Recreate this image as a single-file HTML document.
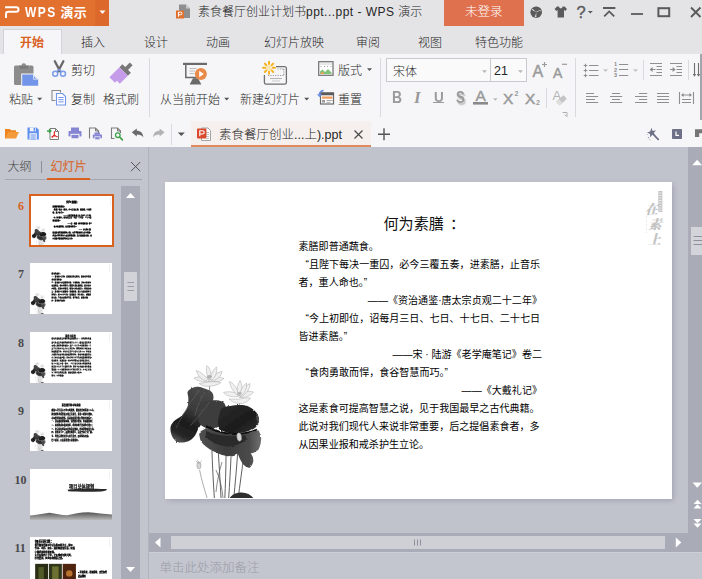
<!DOCTYPE html>
<html lang="zh-CN"><head><meta charset="utf-8"><title>WPS 演示</title>
<style>
*{box-sizing:border-box;margin:0;padding:0}
html,body{width:702px;height:579px;overflow:hidden;background:#c2c4ce}
body{position:relative;font-family:"Liberation Sans","Noto Sans CJK SC",sans-serif;font-size:12px;color:#3a3a3a;font-weight:300}
.a{position:absolute}
.t{position:absolute;white-space:nowrap;line-height:1}
svg.ov{position:absolute;left:0;top:0;width:702px;height:579px;overflow:visible}
#titlebar{left:0;top:0;width:702px;height:54px;background:#e4e4e7}
#wpsbtn{left:0;top:0;width:95px;height:25.5px;background:#e2712f}
#wpsdd{left:95px;top:0;width:14px;height:25.5px;background:#dc692b}
#login{left:444px;top:0;width:80px;height:25.5px;background:#e0714f}
#acttab{left:3px;top:29px;width:59px;height:26px;background:#f6f6f8;border:1px solid #d2d3d9;border-bottom:none}
#ribbon{left:0;top:54px;width:702px;height:93px;background:#f6f6f8}
#doctab{left:191px;top:121px;width:180px;height:26px;background:#f5f0ed;border-bottom:2px solid #e0895c}
.tab{font-size:12px;top:37px;color:#262626}
.rl{font-size:12px;color:#262626}
.sep{position:absolute;width:1px;background:#d9dade}
#fontbox{left:386px;top:58px;width:105px;height:24px;border:1px solid #c9cacf;background:#fafafb}
#sizebox{left:490px;top:58px;width:37px;height:24px;border:1px solid #c9cacf;background:#fafafb}
#side{left:0;top:147px;width:148px;height:432px;background:#c2c4ce}
#sidesep{left:148px;top:147px;width:1px;height:432px;background:#b0b2bd}
#main{left:149px;top:147px;width:553px;height:432px;background:#c0c2cc}
#sscroll{left:121px;top:186px;width:19px;height:393px;background:#a9abb7}
#shandle{left:124px;top:272px;width:13px;height:29px;background:#d1d3d9;border-radius:1px}
#slide{left:165px;top:182px;width:507px;height:316.5px;background:#fff;box-shadow:1.5px 1.5px 5px rgba(60,60,85,.22)}
#vscroll{left:688px;top:147px;width:14px;height:386px;background:#a9abb7}
#vhandle{left:691px;top:227px;width:11px;height:28px;background:#d3d4da}
#hscroll{left:149px;top:532.5px;width:553px;height:20px;background:#a9abb7}
#htrack{left:171px;top:535.5px;width:494px;height:13.5px;background:#cfd0d6}
#notes{left:149px;top:552px;width:553px;height:27px;background:#c3c5cf;border-top:1px solid #cdcfd7}
.thumb{left:30px;width:82px;height:51px;background:#fff;overflow:hidden}
.num{font-family:"Liberation Serif",serif;font-weight:bold;font-size:12px;color:#4a4a4a}
.sl{font-size:10.06px;color:#000;left:298.5px;font-weight:400}
.sr{font-size:10.06px;color:#000;right:160px;font-weight:400}
.q{display:inline-block;width:10.4px;text-align:right}
.g{color:#9a9a9a}
.gs{-webkit-text-stroke:.45px #9a9a9a}
.tc{position:absolute;left:0;top:0;width:507px;height:316px;transform:scale(.1617);transform-origin:0 0}
</style></head><body>
<div class="a" id="titlebar"></div>
<div class="a" id="wpsbtn"></div><div class="a" id="wpsdd"></div>
<div class="t" style="left:25px;top:6px;font-size:13px;color:#fff;font-weight:bold;letter-spacing:.3px"><span style="display:inline-block;font-size:12px;letter-spacing:1.4px;transform:scaleY(1.16);transform-origin:0 70%">WPS</span> 演示</div>
<div class="t" style="left:198px;top:6px;font-size:12px;color:#262626">素食餐厅创业计划书<span style="letter-spacing:.47px">ppt...ppt - WPS </span>演示</div>
<div class="a" id="login"></div>
<div class="t" style="left:465px;top:6px;font-size:12.5px;color:#fff">未登录</div>
<div class="a" id="acttab"></div>
<div class="t tab" style="left:20px;color:#d9611e;font-weight:bold">开始</div>
<div class="t tab" style="left:81px">插入</div>
<div class="t tab" style="left:144px">设计</div>
<div class="t tab" style="left:206px">动画</div>
<div class="t tab" style="left:264px">幻灯片放映</div>
<div class="t tab" style="left:356px">审阅</div>
<div class="t tab" style="left:418px">视图</div>
<div class="t tab" style="left:475px">特色功能</div>
<div class="a" id="ribbon"></div>
<div class="sep" style="left:149px;top:58px;height:59px"></div>
<div class="sep" style="left:380px;top:58px;height:59px"></div>
<div class="sep" style="left:575px;top:58px;height:59px"></div>
<div class="sep" style="left:546px;top:88px;height:20px"></div>
<div class="sep" style="left:643px;top:60px;height:20px"></div>
<div class="sep" style="left:688px;top:60px;height:20px"></div>
<div class="sep" style="left:171px;top:124px;height:21px"></div>
<div class="t rl" style="left:9px;top:94px">粘贴</div>
<div class="t rl" style="left:71px;top:65px">剪切</div>
<div class="t rl" style="left:71px;top:94px">复制</div>
<div class="t rl" style="left:103px;top:94px">格式刷</div>
<div class="t rl" style="left:160px;top:94px">从当前开始</div>
<div class="t rl" style="left:240px;top:94px">新建幻灯片</div>
<div class="t rl" style="left:338px;top:65px">版式</div>
<div class="t rl" style="left:338px;top:94px">重置</div>
<div class="a" style="left:700px;top:54px;width:2px;height:66px;background:#a3a5ad"></div>
<div class="a" id="fontbox"></div><div class="a" id="sizebox"></div>
<div class="t rl" style="left:393px;top:66px">宋体</div>
<div class="t rl" style="left:494px;top:65px;font-size:12.5px">21</div>
<div class="t g" style="left:391.500px;top:89px;font-size:16.500px;font-weight:bold;transform:scaleX(.84);transform-origin:0 0">B</div>
<div class="t g" style="left:414px;top:88.500px;font-size:17px;font-weight:bold;font-style:italic;font-family:'Liberation Serif',serif">I</div>
<div class="t g" style="left:433.500px;top:89px;font-size:15px;font-weight:bold;transform:scaleX(.9);transform-origin:0 0">U</div>
<div class="a" style="left:433px;top:102px;width:11px;height:1px;background:#9a9a9a"></div>
<div class="t g" style="left:455.500px;top:89px;font-size:16.500px;font-weight:bold;text-shadow:1.500px 1.500px 1.500px #bbb;transform:scaleX(.8);transform-origin:0 0">S</div>
<div class="t g gs" style="left:475.500px;top:87.500px;font-size:15.500px">A</div>
<div class="t g gs" style="left:503px;top:91px;font-size:15.500px">X</div>
<div class="t g" style="left:514.500px;top:90px;font-size:7px;font-weight:bold">2</div>
<div class="t g gs" style="left:525px;top:91px;font-size:15.500px">X</div>
<div class="t g" style="left:536px;top:98.500px;font-size:7px;font-weight:bold">2</div>
<div class="t g gs" style="left:532.500px;top:64px;font-size:16px">A</div>
<div class="t g gs" style="left:553px;top:65.500px;font-size:14px">A</div>
<div class="t" style="left:552.500px;top:89px;font-size:13px;color:#b5b5b5">A</div>
<div class="a" id="doctab"></div>
<div class="t" style="left:219px;top:129px;font-size:12.5px;color:#262626">素食餐厅创业...上).ppt</div>
<div class="a" id="side"></div><div class="a" id="sidesep"></div>
<div class="a" id="main"></div>
<div class="t" style="left:7.5px;top:161px;font-size:12px;color:#444">大纲</div>
<div class="a" style="left:40.5px;top:161px;width:1px;height:12px;background:#8c8e98"></div>
<div class="t" style="left:50.5px;top:161px;font-size:12px;color:#d9611e;-webkit-text-stroke:.3px #d9611e">幻灯片</div>
<div class="a" style="left:5px;top:179px;width:137px;height:1px;background:#a3a5b0"></div>
<div class="a" style="left:47px;top:178px;width:43px;height:2px;background:#d9611e"></div>
<div class="a" id="sscroll"></div><div class="a" id="shandle"></div>
<!--THUMBS-->
<div class="t num" style="left:18px;top:200px;color:#d9611e">6</div>
<div class="t num" style="left:18px;top:268px;color:#4a4a4a">7</div>
<div class="t num" style="left:18px;top:336.5px;color:#4a4a4a">8</div>
<div class="t num" style="left:18px;top:405px;color:#4a4a4a">9</div>
<div class="t num" style="left:14.5px;top:473.5px;color:#4a4a4a">10</div>
<div class="t num" style="left:14.5px;top:542px;color:#4a4a4a">11</div>
<div class="a" style="left:28.5px;top:194px;width:85px;height:53px;background:#d9611e"></div>
<div class="a thumb" style="left:30.5px;top:196px;width:81px;height:49px"><div class="tc"><svg class="a" style="left:0;top:0;width:507px;height:316px" viewBox="165 182 507 316"><use href="#lotus"/><rect x="655" y="191" width="5" height="50" fill="#ececec"/></svg><div class="t" style="left:218px;top:33px;font-size:16px;font-weight:900;color:#000;-webkit-text-stroke:1.2px #000;">何为素膳：</div><div class="t" style="left:133px;top:59px;font-size:10.13px;font-weight:900;color:#000;-webkit-text-stroke:1.2px #000;">素膳即普通蔬食。</div><div class="t" style="left:133px;top:77px;font-size:10.13px;font-weight:900;color:#000;-webkit-text-stroke:1.2px #000;">&nbsp;“且陛下每决一重囚，必今三覆五奏，进素膳，止音乐</div><div class="t" style="left:133px;top:95px;font-size:10.13px;font-weight:900;color:#000;-webkit-text-stroke:1.2px #000;">者，重人命也。”</div><div class="t" style="right:130px;top:113px;font-size:10.13px;font-weight:900;color:#000;-webkit-text-stroke:1.2px #000;">——《资治通鉴·唐太宗贞观二十二年》</div><div class="t" style="left:133px;top:131px;font-size:10.13px;font-weight:900;color:#000;-webkit-text-stroke:1.2px #000;">&nbsp;“今上初即位，诏每月三日、七日、十七日、二十七日</div><div class="t" style="left:133px;top:149px;font-size:10.13px;font-weight:900;color:#000;-webkit-text-stroke:1.2px #000;">皆进素膳。”</div><div class="t" style="right:130px;top:167px;font-size:10.13px;font-weight:900;color:#000;-webkit-text-stroke:1.2px #000;">——宋 · 陆游《老学庵笔记》卷二</div><div class="t" style="left:133px;top:185px;font-size:10.13px;font-weight:900;color:#000;-webkit-text-stroke:1.2px #000;">&nbsp;“食肉勇敢而悍，食谷智慧而巧。”</div><div class="t" style="right:130px;top:203px;font-size:10.13px;font-weight:900;color:#000;-webkit-text-stroke:1.2px #000;">——《大戴礼记》</div><div class="t" style="left:133px;top:221px;font-size:10.13px;font-weight:900;color:#000;-webkit-text-stroke:1.2px #000;">这是素食可提高智慧之说，见于我国最早之古代典籍。</div><div class="t" style="left:133px;top:239px;font-size:10.13px;font-weight:900;color:#000;-webkit-text-stroke:1.2px #000;">此说对我们现代人来说非常重要，后之提倡素食者，多</div><div class="t" style="left:133px;top:257px;font-size:10.13px;font-weight:900;color:#000;-webkit-text-stroke:1.2px #000;">从因果业报和戒杀护生立论。</div></div></div>
<div class="a thumb" style="left:30px;top:263px;width:82px;height:51px"><div class="tc"><svg class="a" style="left:0;top:0;width:507px;height:316px" viewBox="165 182 507 316"><use href="#lotus"/><rect x="655" y="191" width="5" height="50" fill="#ececec"/></svg><div class="t" style="left:133px;top:60.0px;font-size:10.13px;font-weight:900;color:#000;-webkit-text-stroke:0.9px #000;">素食的益处：</div><div class="t" style="left:133px;top:78.2px;font-size:10.13px;font-weight:900;color:#000;-webkit-text-stroke:0.9px #000;">一、素食使人长寿。根据营养学家研究，素食者比非素</div><div class="t" style="left:133px;top:96.4px;font-size:10.13px;font-weight:900;color:#000;-webkit-text-stroke:0.9px #000;">食者长寿得多。</div><div class="t" style="left:133px;top:114.6px;font-size:10.13px;font-weight:900;color:#000;-webkit-text-stroke:0.9px #000;">二、素食使人体质酸碱平衡，不易得病。动物肉类食物</div><div class="t" style="left:133px;top:132.8px;font-size:10.13px;font-weight:900;color:#000;-webkit-text-stroke:0.9px #000;">多呈酸性，使血液酸化；蔬菜水果多呈碱性，能中和体</div><div class="t" style="left:133px;top:151.0px;font-size:10.13px;font-weight:900;color:#000;-webkit-text-stroke:0.9px #000;">内酸性，保持血液清洁，增强人体免疫能力，预防疾病。</div><div class="t" style="left:133px;top:169.2px;font-size:10.13px;font-weight:900;color:#000;-webkit-text-stroke:0.9px #000;">三、素食使人头脑清晰、思维敏捷，能大大提高智慧与</div><div class="t" style="left:133px;top:187.39999999999998px;font-size:10.13px;font-weight:900;color:#000;-webkit-text-stroke:0.9px #000;">判断力，使人心平气和、性情温良、耐力持久，减轻肠</div><div class="t" style="left:133px;top:205.6px;font-size:10.13px;font-weight:900;color:#000;-webkit-text-stroke:0.9px #000;">胃负担，也使皮肤细腻光洁，容光焕发，身轻体健。</div><div class="t" style="left:133px;top:223.79999999999998px;font-size:10.13px;font-weight:900;color:#000;-webkit-text-stroke:0.9px #000;">四、素食最为经济。</div></div></div>
<div class="a thumb" style="left:30px;top:331.5px;width:82px;height:51px"><div class="tc"><svg class="a" style="left:0;top:0;width:507px;height:316px" viewBox="165 182 507 316"><use href="#lotus"/><rect x="655" y="191" width="5" height="50" fill="#ececec"/></svg><div class="t" style="left:218px;top:18px;font-size:13px;font-weight:900;color:#000;-webkit-text-stroke:1.2px #000;">素食与环保</div><div class="t" style="left:133px;top:38px;font-size:10.2px;font-weight:900;color:#000;-webkit-text-stroke:0.6px #000;">畜牧业是造成全球暖化的主要原因之一，其所排放的温</div><div class="t" style="left:133px;top:57px;font-size:10.2px;font-weight:900;color:#000;-webkit-text-stroke:0.6px #000;">室气体占全球总排放量的百分之十八，超过全世界所有</div><div class="t" style="left:133px;top:76px;font-size:10.2px;font-weight:900;color:#000;-webkit-text-stroke:0.6px #000;">交通工具排放量的总和。生产一公斤牛肉需要消耗一万</div><div class="t" style="left:133px;top:95px;font-size:10.2px;font-weight:900;color:#000;-webkit-text-stroke:0.6px #000;">五千公升的水以及七公斤的谷物，而同样的土地若用来</div><div class="t" style="left:133px;top:114px;font-size:10.2px;font-weight:900;color:#000;-webkit-text-stroke:0.6px #000;">种植蔬菜谷物，则可以养活二十倍以上的人口。雨林被</div><div class="t" style="left:133px;top:133px;font-size:10.2px;font-weight:900;color:#000;-webkit-text-stroke:0.6px #000;">大量砍伐用来放牧和种植饲料作物，导致物种急剧消失，</div><div class="t" style="left:133px;top:152px;font-size:10.2px;font-weight:900;color:#000;-webkit-text-stroke:0.6px #000;">水土流失日益严重，河流与地下水也受到牲畜粪便污染。</div><div class="t" style="left:133px;top:171px;font-size:10.2px;font-weight:900;color:#000;-webkit-text-stroke:0.6px #000;">选择素食，就是选择一种对地球更加友善的生活方式，</div><div class="t" style="left:133px;top:190px;font-size:10.2px;font-weight:900;color:#000;-webkit-text-stroke:0.6px #000;">每个人每天少吃一餐肉，一年下来可以减少的碳排放量</div><div class="t" style="left:133px;top:209px;font-size:10.2px;font-weight:900;color:#000;-webkit-text-stroke:0.6px #000;">相当于少开几千公里的汽车。素食不仅有益于身体健康，</div><div class="t" style="left:133px;top:228px;font-size:10.2px;font-weight:900;color:#000;-webkit-text-stroke:0.6px #000;">更是每一个人都能够身体力行的环保行动，从今天开始，</div><div class="t" style="left:133px;top:247px;font-size:10.2px;font-weight:900;color:#000;-webkit-text-stroke:0.6px #000;">为了我们共同的家园，请多吃蔬食少吃肉。</div><div class="t" style="left:133px;top:266px;font-size:10.2px;font-weight:900;color:#000;-webkit-text-stroke:0.6px #000;">素食，从我做起。</div></div></div>
<div class="a thumb" style="left:30px;top:400px;width:82px;height:51px"><div class="tc"><svg class="a" style="left:0;top:0;width:507px;height:316px" viewBox="165 182 507 316"><use href="#lotus"/><rect x="655" y="191" width="5" height="50" fill="#ececec"/></svg><div class="t" style="left:196px;top:26px;font-size:13px;font-weight:900;color:#000;-webkit-text-stroke:1.2px #000;">素食餐厅的市场前景</div><div class="t" style="left:133px;top:60px;font-size:10.8px;font-weight:900;color:#000;-webkit-text-stroke:0.9px #000;">随着人们生活水平的不断提高，健康饮食观念深入人心，</div><div class="t" style="left:133px;top:83px;font-size:10.8px;font-weight:900;color:#000;-webkit-text-stroke:0.9px #000;">越来越多的消费者开始关注素食，素食人群逐年增加，</div><div class="t" style="left:133px;top:106px;font-size:10.8px;font-weight:900;color:#000;-webkit-text-stroke:0.9px #000;">市场需求持续增长。目前国内素食餐厅数量仍然偏少，</div><div class="t" style="left:133px;top:129px;font-size:10.8px;font-weight:900;color:#000;-webkit-text-stroke:0.9px #000;">一、目标顾客群体明确，消费能力较强，忠诚度很高；</div><div class="t" style="left:133px;top:152px;font-size:10.8px;font-weight:900;color:#000;-webkit-text-stroke:0.9px #000;">二、原材料成本相对较低，毛利率高于普通的中餐厅；</div><div class="t" style="left:133px;top:175px;font-size:10.8px;font-weight:900;color:#000;-webkit-text-stroke:0.9px #000;">三、符合绿色低碳环保的发展潮流，容易获得政策支持。</div><div class="t" style="left:133px;top:198px;font-size:10.8px;font-weight:900;color:#000;-webkit-text-stroke:0.9px #000;">四、竞争对手少，品牌容易建立，发展空间十分广阔。</div><div class="t" style="left:133px;top:221px;font-size:10.8px;font-weight:900;color:#000;-webkit-text-stroke:0.9px #000;">五、可结合禅茶文化与养生讲座，形成特色经营。</div><div class="t" style="left:133px;top:244px;font-size:10.8px;font-weight:900;color:#000;-webkit-text-stroke:0.9px #000;">综上所述，开设素食餐厅前景看好。</div></div></div>
<div class="a thumb" style="left:30px;top:468.5px;width:82px;height:51px"><div class="tc"><svg class="a" style="left:0;top:0;width:507px;height:316px" viewBox="0 0 507 316"><defs><filter id="b10"><feGaussianBlur stdDeviation="3"/></filter><linearGradient id="m10" x1="0" y1="0" x2="0" y2="1"><stop offset="0" stop-color="#555"/><stop offset="1" stop-color="#bbb"/></linearGradient></defs><path d="M232 128c40-6 120-8 240-4 10 6-8 14-30 15-70 3-150 2-205-1z" fill="#2a2a2a" filter="url(#b10)"/><path d="M0 288c40-4 80-14 120-18 40 4 70 14 110 16 40-6 80-18 130-18 50 2 100 12 147 14v34H0z" fill="url(#m10)" filter="url(#b10)"/><rect x="490" y="9" width="5" height="50" fill="#ececec"/></svg><div class="t" style="left:241px;top:96px;font-size:26px;font-weight:700;color:#000;-webkit-text-stroke:1.2px #000;color:#333">项目总体规划</div></div></div>
<div class="a thumb" style="left:30px;top:537px;width:82px;height:42px"><div class="tc"><svg class="a" style="left:0;top:0;width:507px;height:316px" viewBox="0 0 507 316"><rect x="32" y="166" width="80" height="150" fill="#2a2c14"/><rect x="52" y="186" width="34" height="130" fill="#4f5a26"/><rect x="117" y="166" width="80" height="150" fill="#30361a"/><rect x="137" y="182" width="40" height="134" fill="#6c7030"/><rect x="202" y="166" width="82" height="150" fill="#4e240e"/><circle cx="243" cy="225" r="20" fill="#b8722c"/><rect x="490" y="9" width="5" height="50" fill="#ececec"/></svg><div class="t" style="left:30px;top:16px;font-size:24px;font-weight:900;color:#000;-webkit-text-stroke:1.2px #000;">餐厅环境：</div><div class="t" style="left:30px;top:46px;font-size:13px;font-weight:900;color:#000;-webkit-text-stroke:1.2px #000;">餐厅整体装修以中式古典风格为主，配以</div><div class="t" style="left:30px;top:66px;font-size:13px;font-weight:900;color:#000;-webkit-text-stroke:1.2px #000;">竹木、山石、流水、莲花等自然元素，营造</div><div class="t" style="left:30px;top:86px;font-size:13px;font-weight:900;color:#000;-webkit-text-stroke:1.2px #000;">宁静祥和的用餐氛围。</div><div class="t" style="left:30px;top:106px;font-size:13px;font-weight:900;color:#000;-webkit-text-stroke:1.2px #000;">大厅设散座八十位，另设雅致包间六间，</div><div class="t" style="left:30px;top:126px;font-size:13px;font-weight:900;color:#000;-webkit-text-stroke:1.2px #000;">灯光柔和，处处体现禅意之美。</div><div class="t" style="left:297px;top:214px;font-size:12px;font-weight:900;color:#000;-webkit-text-stroke:1.2px #000;">■ 环境优雅，格调清新，宾至如归</div><div class="t" style="left:297px;top:238px;font-size:12px;font-weight:900;color:#000;-webkit-text-stroke:1.2px #000;">菜品精致</div></div></div>
<!--/THUMBS-->
<div class="a" id="slide"></div>
<div class="t" style="left:383.5px;top:215.5px;font-size:15.1px;color:#111;font-weight:400">何为素膳<span style="margin-left:6px">：</span></div>
<div class="t sl" style="top:241.6px">素膳即普通蔬食。</div>
<div class="t sl" style="top:259.7px"><span class="q">“</span>且陛下每决一重囚，必今三覆五奏，进素膳，止音乐</div>
<div class="t sl" style="top:277.7px">者，重人命也。”</div>
<div class="t sr" style="top:295.8px">——《资治通鉴·唐太宗贞观二十二年》</div>
<div class="t sl" style="top:313.9px"><span class="q">“</span>今上初即位，诏每月三日、七日、十七日、二十七日</div>
<div class="t sl" style="top:331.9px">皆进素膳。”</div>
<div class="t sr" style="top:350.0px">——宋 · 陆游《老学庵笔记》卷二</div>
<div class="t sl" style="top:368.1px"><span class="q">“</span>食肉勇敢而悍，食谷智慧而巧。”</div>
<div class="t sr" style="top:386.2px">——《大戴礼记》</div>
<div class="t sl" style="top:404.2px">这是素食可提高智慧之说，见于我国最早之古代典籍。</div>
<div class="t sl" style="top:422.3px">此说对我们现代人来说非常重要，后之提倡素食者，多</div>
<div class="t sl" style="top:440.4px">从因果业报和戒杀护生立论。</div>
<!--LOTUS-->
<svg class="ov" viewBox="0 0 702 579">
<defs>
<filter id="bl" x="-10%" y="-10%" width="120%" height="120%"><feGaussianBlur stdDeviation="0.4"/></filter><filter id="lf" x="-10%" y="-10%" width="120%" height="120%"><feTurbulence type="fractalNoise" baseFrequency="0.22" numOctaves="2" seed="5" result="n"/><feDisplacementMap in="SourceGraphic" in2="n" scale="2.4" xChannelSelector="R" yChannelSelector="G" result="d"/><feGaussianBlur in="d" stdDeviation="0.35"/></filter>
<linearGradient id="lg1" x1=".7" y1="0" x2=".3" y2="1"><stop offset="0" stop-color="#484848"/><stop offset=".4" stop-color="#3c3c3c"/><stop offset=".68" stop-color="#1c1c1c"/><stop offset=".9" stop-color="#262626"/><stop offset="1" stop-color="#4c4c4c"/></linearGradient><linearGradient id="lg2" x1="0" y1="0" x2="1" y2="1"><stop offset="0" stop-color="#2c2c2c"/><stop offset=".6" stop-color="#1c1c1c"/><stop offset="1" stop-color="#333"/></linearGradient>
<linearGradient id="lg3" x1="0" y1="0" x2="1" y2="0"><stop offset="0" stop-color="#505050"/><stop offset=".45" stop-color="#3c3c3c"/><stop offset=".8" stop-color="#4a4a4a"/><stop offset="1" stop-color="#707070"/></linearGradient>
<clipPath id="sc"><rect x="165" y="182" width="507" height="316"/></clipPath>
<g id="lotus">
<g filter="url(#bl)">
<g stroke="#4e4e4e" stroke-width=".9" fill="none">
<path d="M211.800 446c.5 18 1.500 36 2.600 53M218.300 452c1 16 2 32 2.800 47M226 455c0 15-.6 30-1.200 44M231.200 452c-.6 16-1.600 32-2.600 47M237.700 452c-1 16-2.600 32-4 47M244 455c-2 14-4 30-6 44"/>
<path d="M199.600 470c2 10 5 20 7.800 29" stroke="#8a8a8a" stroke-width=".7"/>
<path d="M209.600 386v6M239.500 402c.6 10 .8 22 .4 34" stroke="#777" stroke-width=".8"/>
<path d="M222 462c-3 10-5 20-6 30M216 470c4 8 6 18 7 28" stroke="#5a5a5a" stroke-width=".7"/>
</g>
</g>
<g filter="url(#lf)">
<path d="M198.900 432.900C203 429 208 427.500 211.800 427.700c5 1.800 10 4.500 15.600 5.200 6 .4 12 .3 18.100 0 4.500-.4 9-1.500 12.900-2.600 2.200 3 3.200 6.500 2.600 10.400-.4 3.500-1.200 6.500-2.600 9-2.200 2-5 3.200-7.700 3.900 1.800 2.200 2.800 5 2.600 7.800-.6 2.600-2 5-3.900 6.500-2.800-.6-5-2-6.500-3.900-2.200-3-3.800-6.600-5.200-10.400-3.300 1.500-6.800 2.600-10.300 2.600-4.200-.6-8.200-2-11.700-3.900-4-1.600-7.500-3.800-10.400-6.400-2.400-1.800-4.200-4-5.100-6.500z" fill="url(#lg3)"/>
<path d="M206 437c6 6 14 9.500 23 9.500 7-.5 13-3 18-7.500l-2-4c-10 2-26 2-39-4z" fill="#2a2a2a"/>
<path d="M192.200 388.000C194.000 387.100 196.200 386.600 198.400 386.700C200.600 386.800 203.200 387.900 205.400 388.800C207.600 389.700 210.300 390.500 211.700 391.900C213.000 393.300 213.500 395.500 213.500 397.300C213.500 399.100 212.800 401.500 211.700 402.800C210.600 404.100 208.300 403.700 207.000 405.100C205.700 406.500 204.700 408.500 203.900 411.300C203.100 414.100 203.200 419.400 202.300 422.200C201.400 425.000 199.700 426.100 198.400 428.400C197.100 430.700 196.200 434.100 194.500 436.200C192.800 438.300 190.900 440.200 188.300 441.200C185.700 442.200 181.600 443.000 179.000 442.400C176.400 441.800 174.200 440.100 172.800 437.800C171.400 435.500 170.300 431.100 170.400 428.400C170.500 425.700 171.700 423.600 173.600 421.400C175.500 419.200 179.800 417.600 182.100 415.200C184.400 412.800 186.600 409.700 187.600 406.700C188.600 403.700 188.300 399.800 188.300 397.300C188.300 394.800 186.900 393.400 187.600 391.900C188.200 390.300 190.400 388.900 192.200 388.000z" fill="url(#lg1)"/>

<path d="M200.5 404.0C202.7 402.1 208.1 400.7 211.7 400.3C215.3 399.9 219.6 400.2 222.0 401.5C224.4 402.8 225.7 404.8 226.0 408.2C226.3 411.6 226.3 418.5 224.0 422.0C221.7 425.5 216.0 428.7 212.0 429.0C208.0 429.3 202.2 426.8 200.0 424.0C197.8 421.2 198.4 415.3 198.5 412.0C198.6 408.7 198.3 405.9 200.5 404.0z" fill="#3c3c3c"/>
<path d="M221.800 408.200C223.600 406.800 227.300 406.400 230.300 405.900C233.300 405.400 236.600 405.000 239.700 405.100C242.800 405.200 246.200 405.400 249.000 406.700C251.800 408.000 255.100 410.600 256.800 412.900C258.500 415.200 259.200 418.400 259.100 420.700C259.000 423.000 257.700 425.200 256.000 426.900C254.300 428.600 251.700 429.800 249.000 430.800C246.300 431.800 242.800 432.700 239.700 433.100C236.600 433.500 233.400 433.600 230.300 433.100C227.200 432.600 223.100 431.600 221.000 430.000C218.900 428.400 218.200 426.400 217.900 423.800C217.600 421.200 218.800 417.000 219.400 414.400C220.100 411.800 220.000 409.600 221.800 408.200z" fill="url(#lg2)"/>
<path d="M205 392c-4 6-8 14-10 24M199 390c-7 10-15 22-23 38M211 400c-6 8-13 18-21 26" stroke="#666" stroke-width=".7" fill="none" opacity=".8"/>
<path d="M206 426c8 5 18 7.500 28 8 8 0 16-1.500 23-4.500" stroke="#0e0e0e" stroke-width="1.800" fill="none"/>
<path d="M256 414c2.500 3 3 7 1.500 11" stroke="#555" stroke-width="1.200" fill="none"/>
</g>
<g filter="url(#bl)">
<ellipse cx="239.200" cy="437" rx="2.300" ry="4.200" fill="#d8d8d8" stroke="#8a8a8a" stroke-width=".5" transform="rotate(-8 239.200 437)"/>
<g fill="#eeeeee" stroke="#a6a6a6" stroke-width=".5">
<path d="M209 378c-5-1-10-2-15 0 3 3 9 4.500 15 3.500z"/><path d="M209 378c5-1 10-1.500 15 .5-3 3-9 4-15 3z"/>
<path d="M208 379c-4-4-8-7.500-11.500-8.500.5 4.500 4 8.500 9.500 10.500z"/><path d="M210 379c4-4 8-7 12-7.500-.5 4.500-4.500 8-10 10z"/>
<path d="M209 379c-2.500-4.500-3.500-9.500-2-13.500 3 2.500 4.500 8 4 13.500z"/><path d="M210 379c1-5 3-9.500 6.500-12 1 4.500-.5 9.500-4.500 13z"/>
<path d="M199 383.500c3 2.500 8 3.500 12 2.500 4-.3 8-1.500 10-3.500-4-1-9-1-13-.5z"/>
</g>
<ellipse cx="209.400" cy="376.600" rx="2.600" ry="1.600" fill="#b0b0b0"/>
<g fill="#f0f0f0" stroke="#a6a6a6" stroke-width=".5">
<path d="M238 394c-4-2-9-3-14.500-1.500 3 3.500 8.500 5 14.500 4z"/><path d="M238 394c5-2.500 10-3.500 15.500-2-3 4-9 6-14.500 5.500z"/>
<path d="M237 395c-4-4-7-9-7.500-13.500 4.500 2 7.500 6.500 9 12z"/><path d="M239 395c3-5 6.500-9.500 11-11.500.3 5-3 10-9 13.500z"/>
<path d="M238 395c-1.500-5-.5-10.500 2-14.500 2.500 4 2.500 9.500 0 14.500z"/><path d="M239.500 395c1-5 3.500-9.500 7-12 .5 5-1.500 10-5.500 13z"/>
<path d="M229 399c3 3 8 5 13 4.500 3.500-.5 6.500-2.500 8.500-5.500-4-.5-8.500.3-12 1.200z"/>
</g>
<ellipse cx="239.500" cy="393.300" rx="2.400" ry="1.600" fill="#b8b8b8"/>
<ellipse cx="198.900" cy="465.500" rx="2" ry="3.600" fill="#d6d6d6" stroke="#8c8c8c" stroke-width=".5"/>
<path d="M196 461l2.900 2.500 2.900-2.800M197 459.500l1.900 3" stroke="#8c8c8c" stroke-width=".5" fill="none"/>
<path d="M229.500 498.500c2-4 7-6 12-6 5 .2 9.500 2 12 6z" fill="#2e2e2e"/>
</g>
</g>
</defs>
<g clip-path="url(#sc)"><use href="#lotus"/></g>
<!-- calligraphy deco -->
<rect x="658.300" y="191" width="4" height="21" fill="#c4c4c4"/>
<path d="M659 193h2.600M659 195.500h2.600M659 198h2.600M659 200.500h2.600M659 203h2.600M659 205.500h2.600M659 208h2.600M659 210.300h2.600" stroke="#fff" stroke-width=".7"/>
<path d="M646.500 216v18" stroke="#d5d5d5" stroke-width=".6" stroke-dasharray="1 1"/>
<g font-family="Noto Serif CJK SC,serif" font-weight="900" font-style="italic" fill="#c2c2c2" font-size="13">
<text x="645" y="213.500">在</text>
<text x="648.500" y="229">素</text>
<text x="648" y="243.500">上</text>
</g>
</svg>
<!--/LOTUS-->
<div class="a" id="vscroll"></div><div class="a" id="vhandle"></div>
<div class="a" id="hscroll"></div><div class="a" id="htrack"></div>
<div class="a" id="notes"></div>
<div class="t" style="left:159.5px;top:562px;font-size:12.5px;color:#9a9ca7">单击此处添加备注</div>
<!--ICONS-->
<svg class="ov" viewBox="0 0 702 579">
<!-- title bar -->
<path d="M5 7.2H16.200a2.300 2.300 0 0 1 0 4.600H8.300a2.300 2.300 0 0 0-2.300 2.300V18" fill="none" stroke="#fff" stroke-width="2"/>
<path d="M99.5 10.5h6l-3 3.6z" fill="#fff"/>
<path d="M179 4.6h7l4 4V18h-11z" fill="#8e8e8e"/><path d="M186 4.6l4 4h-4z" fill="#c9c9c9"/>
<rect x="176" y="10.5" width="8" height="8" fill="#e2712f"/><path d="M178.5 16.8v-4.6h2.2a1.3 1.3 0 0 1 0 2.6h-2.2" fill="none" stroke="#fff" stroke-width="1"/>
<circle cx="536.2" cy="12.2" r="5.8" fill="#5a5a5a"/>
<path d="M536.2 12.2L532.2 9.4M536.2 12.2L540.6 10.6M536.2 12.2L535.6 17.2" stroke="#e4e4e7" stroke-width="1.5" fill="none"/>
<path d="M532.6 8.6a4.6 4.6 0 0 1 6.2-.8l-2.6 4.4zM540.2 10.4a4.6 4.6 0 0 1-3.6 6.2l-.4-4.4zM535 16.6a4.6 4.6 0 0 1-3-6.6l4.2 2.2z" fill="#5a5a5a"/>
<path d="M557 6.6h2a1.8 1.8 0 0 0 3.600 0h2l2.400 2.400-1.700 2-1.300-1v7.600h-6.400v-7.600l-1.300 1-1.700-2z" fill="#5a5a5a"/>
<text x="576.500" y="17.6" font-family="Liberation Sans,sans-serif" font-size="16.5" fill="#5a5a5a" stroke="#5a5a5a" stroke-width=".35">?</text>
<path d="M587.8 11h5l-2.500 2.600z" fill="#5a5a5a"/>
<path d="M603 8h12.400M604.200 16.400l5-5 5 5" fill="none" stroke="#5a5a5a" stroke-width="1.800"/>
<path d="M631 14h12" stroke="#5a5a5a" stroke-width="1.800"/>
<rect x="658.400" y="8.200" width="10.800" height="8" fill="none" stroke="#5a5a5a" stroke-width="2"/>
<path d="M691 7.500l9.500 9.500M700.500 7.500l-9.500 9.500" stroke="#5a5a5a" stroke-width="1.900"/>
<!-- paste -->
<rect x="14" y="65.500" width="19.500" height="19.500" rx="1.500" fill="#8c8c8c"/>
<path d="M19 68.500v-3h2.500a2.300 2.300 0 0 1 4.600 0h2.500v3z" fill="#8c8c8c"/>
<rect x="19.500" y="66" width="8.500" height="2.600" fill="#7a7a7a"/>
<path d="M21.200 73.400h12.600l5 5v8h-17.600z" fill="#f6f6f8"/>
<path d="M22.200 74.400h11l5 5v6.400h-16z" fill="#7295ea"/>
<path d="M33.200 74.400l5 5h-5z" fill="#f6f6f8"/><path d="M33.900 76.200l2.600 2.600h-2.600z" fill="#7295ea"/>
<path d="M37.200 97.800h5l-2.500 2.800z" fill="#555"/>
<!-- scissors -->
<path d="M54.800 61.200l5.400 10.200M63.400 61.200l-5.400 10.200" stroke="#6a6a6a" stroke-width="2.300" stroke-linecap="round"/>
<circle cx="55.200" cy="73.800" r="2.500" fill="none" stroke="#7c9ce9" stroke-width="1.500"/>
<circle cx="63" cy="73.800" r="2.500" fill="none" stroke="#7c9ce9" stroke-width="1.500"/>
<path d="M56.800 71.800l2.300-2.600M61.400 71.800l-2.300-2.600" stroke="#7c9ce9" stroke-width="1.400"/>
<!-- copy -->
<path d="M55.500 100.500h-3.500v-10h8.500v2" fill="none" stroke="#8a8a8a" stroke-width="1.100"/>
<path d="M56.500 93.500h6l3 3v8.500h-9z" fill="#fff" stroke="#7295ea" stroke-width="1.100"/>
<path d="M58.300 97.500h5.400M58.300 99.700h5.400M58.300 101.900h5.400" stroke="#7295ea" stroke-width="1"/>
<!-- format brush -->
<g transform="translate(120.800 74.300) rotate(45) scale(.92)">
<rect x="-2.200" y="-16" width="4.400" height="8" fill="#777"/>
<rect x="-6.500" y="-9" width="13" height="4.600" fill="#777"/>
<path d="M-6.500 -4.400h13v12.400h-4.500v3h-8.500z" fill="#c49cea"/>
</g>
<!-- play from current -->
<rect x="183" y="62.800" width="24" height="2.200" fill="#6a6a6a"/>
<path d="M185.800 65v12.600h18.800" fill="none" stroke="#6a6a6a" stroke-width="1.500"/>
<path d="M193 78.300h5l3.400 6.200h-11.800z" fill="#6a6a6a"/>
<path d="M189.500 68.500h7M189.500 71h5.500M189.500 73.500h5" stroke="#bdbdbd" stroke-width="1"/>
<circle cx="200.900" cy="74" r="6" fill="#ea8a48"/>
<path d="M199.200 70.800l4.600 3.200-4.600 3.200z" fill="#fff"/>
<path d="M224.200 97.800h5l-2.500 2.800z" fill="#555"/>
<!-- new slide -->
<path d="M276 66.600h8.600a1.800 1.800 0 0 1 1.800 1.800v14a1.800 1.800 0 0 1-1.800 1.800h-18.400a1.800 1.800 0 0 1-1.800-1.800v-7.400" fill="none" stroke="#6f6f6f" stroke-width="1.300"/>
<path d="M268 75.500h15.500M283.800 69v6M277.500 69h6" stroke="#9a9a9a" stroke-width="1.200" stroke-dasharray="1.200 1.200"/>
<path d="M270 78.500h12" stroke="#b5b5b5" stroke-width="1.100"/><path d="M272 81h8" stroke="#c9c9c9" stroke-width="1"/>
<g stroke="#f6b21f" stroke-width="2" stroke-linecap="round">
<path d="M269 61.800v2.300M269 71.500v2.300M263 67.800h2.300M272.700 67.800h2.300M264.800 63.600l1.600 1.600M271.600 70.400l1.600 1.600M273.200 63.600l-1.600 1.600M266.400 70.400l-1.600 1.600"/></g>
<circle cx="269" cy="67.800" r="2.600" fill="#fbe6b0"/>
<path d="M304.200 97.800h5l-2.500 2.800z" fill="#555"/>
<!-- layout -->
<rect x="318.700" y="61.700" width="14.300" height="13.600" fill="#fff" stroke="#777" stroke-width="1.300"/>
<path d="M320.500 64h11M320.500 66.500h1M324 66.500h1M327 66.500h1M330.500 66.500h1" stroke="#a5a5a5" stroke-width="1" stroke-dasharray="1 1"/>
<path d="M320 74v-2.500l2.500-2 2.500 2.500 3-3 3.500 3.500v1.500z" fill="#7fc27a"/>
<path d="M320 74l2.500-2.500 2 2.500z" fill="#f0a058"/>
<path d="M367 68.200h5l-2.500 2.800z" fill="#555"/>
<!-- reset -->
<rect x="320.500" y="93" width="13" height="11" fill="#fff" stroke="#6a6a6a" stroke-width="1.200"/>
<rect x="320" y="92.500" width="14" height="2.800" fill="#5a5a5a"/>
<rect x="322" y="96.500" width="10.500" height="2.200" fill="#ee9a5a"/>
<rect x="322" y="100" width="3" height="2.600" fill="#9a9a9a"/><path d="M326.500 100.500h6M326.500 102.300h4" stroke="#aaa" stroke-width="1"/>
<path d="M323.500 90.700a4 4 0 0 0-4 4" fill="none" stroke="#6a8de6" stroke-width="1.800"/>
<path d="M317 94.300h5l-2.500 3z" fill="#6a8de6"/>
<!-- font box arrows -->
<path d="M482 70.200h5l-2.500 2.800z" fill="#b8b8b8"/><path d="M518 70.200h5l-2.500 2.800z" fill="#b8b8b8"/>
<!-- A+ A- -->
<path d="M542 64.500h5M544.500 62v5" stroke="#9a9a9a" stroke-width="1.200"/>
<path d="M562 64.300h5" stroke="#9a9a9a" stroke-width="1.200"/>
<!-- font color underline -->
<rect x="473" y="102" width="15" height="2.600" fill="#8a8a8a"/>
<path d="M493 98.200h4.600l-2.300 2.600z" fill="#b8b8b8"/>
<!-- eraser -->
<g transform="translate(561.500 100.300) rotate(-42)"><rect x="-5" y="-2.600" width="10" height="5.200" rx="1" fill="#c4c4c4"/><rect x="-5" y="-2.600" width="4" height="5.200" rx="1" fill="#dedede"/></g>
<path d="M562.500 112.500h4.500v4.500M564.800 114.800l1.600 1.600" fill="none" stroke="#b0b0b0" stroke-width="1"/>
<!-- bullets -->
<g stroke="#8f8f8f" stroke-width="1.100" fill="none">
<path d="M589 65.500h9.500M589 70.500h9.500M589 75.500h9.500"/>
<path d="M583.700 65.500h3.600M585.500 63.700v3.600M583.700 70.500h3.600M585.500 68.700v3.600M583.700 75.500h3.600M585.500 73.700v3.600"/>
<path d="M619 64.500h9.200M619 69.500h9.200M619 75.500h9.200"/>
</g>
<path d="M603 69.200h5l-2.500 2.800z" fill="#c4c4c4"/><path d="M633 69.200h5l-2.500 2.800z" fill="#c4c4c4"/>
<g font-family="Liberation Sans,sans-serif" font-size="5.500" font-weight="bold" fill="#8a8a8a"><text x="614" y="66.300">1</text><text x="614" y="71.700">2</text><text x="614" y="77.300">3</text></g>
<!-- indent -->
<g stroke="#8f8f8f" stroke-width="1.100" fill="none">
<path d="M650 63.500h12M650 75.500h12M656.500 66.500h5.500M656.500 69.500h5.500M656.500 72.500h5.500M651 69.500h4.500"/>
<path d="M670 63.500h12M670 75.500h12M676.500 66.500h5.500M676.500 69.500h5.500M676.500 72.500h5.500M670 69.500h4"/>
</g>
<path d="M649.600 69.500l3-2.400v4.800z" fill="#8a8a8a"/><path d="M675.600 69.500l-3-2.400v4.800z" fill="#8a8a8a"/>
<path d="M694.500 63v13M698.500 63v13" stroke="#6f6f6f" stroke-width="1.100"/><path d="M692.800 74h3.400l-1.700 2.800zM696.800 74h3.400l-1.700 2.800z" fill="#6f6f6f"/>
<!-- align -->
<g stroke="#8f8f8f" stroke-width="1.100" fill="none">
<path d="M586 93.500h8M586 96.500h12.200M586 99.500h9M586 102.500h12.200"/>
<path d="M612 93.500h8M610 96.500h12.200M612 99.500h8M610 102.500h12.200"/>
<path d="M639 93.500h8.200M635 96.500h12.200M639 99.500h8.200M635 102.500h12.200"/>
<path d="M657 93.500h12M657 96.500h12M657 99.500h12M657 102.500h12"/>
<path d="M679.500 92v12M693.500 92v12M682 99.500h9M682 102.500h9M682.500 95h8.500"/>
</g>
<path d="M681 95l2.600-2v4zM692 95l-2.600-2v4z" fill="#8a8a8a"/>
</svg>
<svg class="ov" viewBox="0 0 702 579">
<!-- quick access -->
<path d="M5 138.600v-9.600h4.600l1.400 1.500h5v2" fill="#f08a24"/>
<path d="M5 138.600l3-6.600h11l-3 6.600z" fill="#f39a3a"/>
<path d="M5 138.600v-9.600h4.600l1.400 1.500h5v1.500h-8z" fill="#ee8420"/>
<path d="M27.500 127.500h9l2.300 2.300v9.800h-11.300z" fill="#5f90ee"/>
<rect x="29.800" y="127.500" width="6" height="3.800" fill="#f6f6f8"/><rect x="33.600" y="128" width="1.500" height="2.800" fill="#5f90ee"/>
<rect x="29.500" y="133.200" width="7.300" height="6.400" fill="#f6f6f8"/><path d="M30.500 135h5.300M30.500 137h5.300M30.500 139h5.300" stroke="#5f90ee" stroke-width="1"/>
<path d="M50 128.500h5.500l3 3v8h-8.500z" fill="#fff" stroke="#7a7a7a" stroke-width="1"/><path d="M55.500 128.500v3h3" fill="none" stroke="#7a7a7a" stroke-width="1"/>
<path d="M54.500 131.500c-1 3-.2 3.600 2.800 5.600M54.500 131.500c.6 2.500-.8 4.500-2.600 6.400M51.500 136.500c2-.8 4-.8 6.200.3" fill="none" stroke="#e0352b" stroke-width="1.100"/>
<path d="M47 131h3.500M49 129.200l2 1.800-2 1.800" fill="none" stroke="#3fa24a" stroke-width="1.300"/>
<rect x="71" y="127.500" width="8" height="3.500" fill="#8585d3"/>
<rect x="68.500" y="131" width="13" height="5.500" rx=".8" fill="#8585d3"/>
<rect x="71" y="134.300" width="8" height="4.500" fill="#8585d3" stroke="#f6f6f8" stroke-width="1"/>
<path d="M89.500 138.500v-10.500h6l3 3v2" fill="none" stroke="#7a7a7a" stroke-width="1.100"/><path d="M95.500 128v3h3" fill="none" stroke="#7a7a7a" stroke-width="1"/>
<rect x="94.500" y="132.500" width="5.500" height="2.200" fill="#8585d3"/><rect x="92.800" y="134.500" width="9.200" height="3.800" rx=".6" fill="#8585d3"/><rect x="94.800" y="136.800" width="5.200" height="3" fill="#8585d3" stroke="#f6f6f8" stroke-width=".8"/>
<path d="M114.500 138.500h-3v-10.500h6l3 3v2" fill="none" stroke="#7a7a7a" stroke-width="1.100"/><path d="M117.500 128v3h3" fill="none" stroke="#7a7a7a" stroke-width="1"/>
<circle cx="117.800" cy="135.200" r="2.300" fill="none" stroke="#3fa24a" stroke-width="1.300"/><path d="M119.600 137l2.800 2.800" stroke="#3fa24a" stroke-width="1.700" stroke-linecap="round"/>
<path d="M131.800 132.200l5-3.600v2.200c4 0 6.300 2.600 6.600 6.600-1.500-2.300-3.400-3-6.600-3v2z" fill="#6a6a6a"/>
<path d="M164.600 132.200l-5-3.600v2.200c-4 0-6.300 2.600-6.600 6.600 1.500-2.300 3.400-3 6.600-3v2z" fill="#b2b2b2"/>
<path d="M177.800 132.500h7l-3.500 3.600z" fill="#555"/>
<!-- doc tab icon -->
<path d="M201.500 128h6.500l2.500 2.500v10h-9z" fill="#fdfdfd" stroke="#9a9a9a" stroke-width=".9"/>
<path d="M206 132.500h3M206 134.500h3M206 136.500h3M206 138.500h3" stroke="#b5b5b5" stroke-width=".8"/>
<rect x="197" y="128.600" width="9.400" height="9.800" rx=".8" fill="#d9482b"/>
<path d="M199.800 136.200v-5.400h2.800a1.600 1.600 0 0 1 0 3.200h-2.800" fill="none" stroke="#fff" stroke-width="1.100"/>
<path d="M354.500 130.500l8 8M362.500 130.500l-8 8" stroke="#444" stroke-width="1.100"/>
<path d="M378 134.200h12M384 128.300v12" stroke="#555" stroke-width="1.400"/>
<!-- right icons -->
<path d="M651.500 127.700l1.100 3.200 3.400-.6-2.200 2.700 1.800 2.900-3.200-1.100-2.400 2.500.1-3.400-3.100-1.400 3.200-1z" fill="#6e7088"/>
<path d="M653 134l5.200 5.400" stroke="#6e7088" stroke-width="1.800" stroke-linecap="round"/>
<path d="M648.200 137.200l.6 1M649.800 139.600l.3.600M647.400 134.600l.5.500" stroke="#6e7088" stroke-width="1"/>
<rect x="672" y="129" width="10" height="10" rx=".8" fill="#6e7088"/><path d="M676 131.500v3.800h3" fill="none" stroke="#fff" stroke-width="1.200"/>
<path d="M695 129.300h7v4h-2.800v3.700h-4.200z" fill="#757575"/>
<!-- side panel -->
<path d="M131 162l9.200 9.200M140.200 162l-9.200 9.200" stroke="#555" stroke-width="1"/>
<path d="M126 198h9l-4.500-5z" fill="#fff"/><path d="M126 567h9l-4.500 5z" fill="#fff"/>
<path d="M127.500 282.500h6.500M127.500 286.500h6.500M127.500 290.500h6.500" stroke="#9b9da8" stroke-width="1"/>
<!-- scrollbars -->
<path d="M692.300 165.300h9.700l-4.850-5.600z" fill="#fff"/>
<path d="M693.500 236.500h8.500M693.500 240.500h8.500M693.500 244.500h8.500" stroke="#8e909b" stroke-width="1"/>
<path d="M692.500 482.500h9.500l-4.750 5.300z" fill="#fff"/>
<path d="M693.500 504l4-4.300 4 4.300zM693.500 508.500l4-4.300 4 4.300z" fill="#fff"/>
<path d="M693.500 519l4 4.300 4-4.300zM693.500 523.500l4 4.300 4-4.300z" fill="#fff"/>
<path d="M160.500 537.500v10l-5.500-5z" fill="#fff"/><path d="M675.800 537.500v10l5.500-5z" fill="#fff"/>
<path d="M414.500 539.500v6M417.500 539.500v6M420.500 539.500v6" stroke="#8e909b" stroke-width="1"/>
</svg>
<!--/ICONS2-->
</body></html>
